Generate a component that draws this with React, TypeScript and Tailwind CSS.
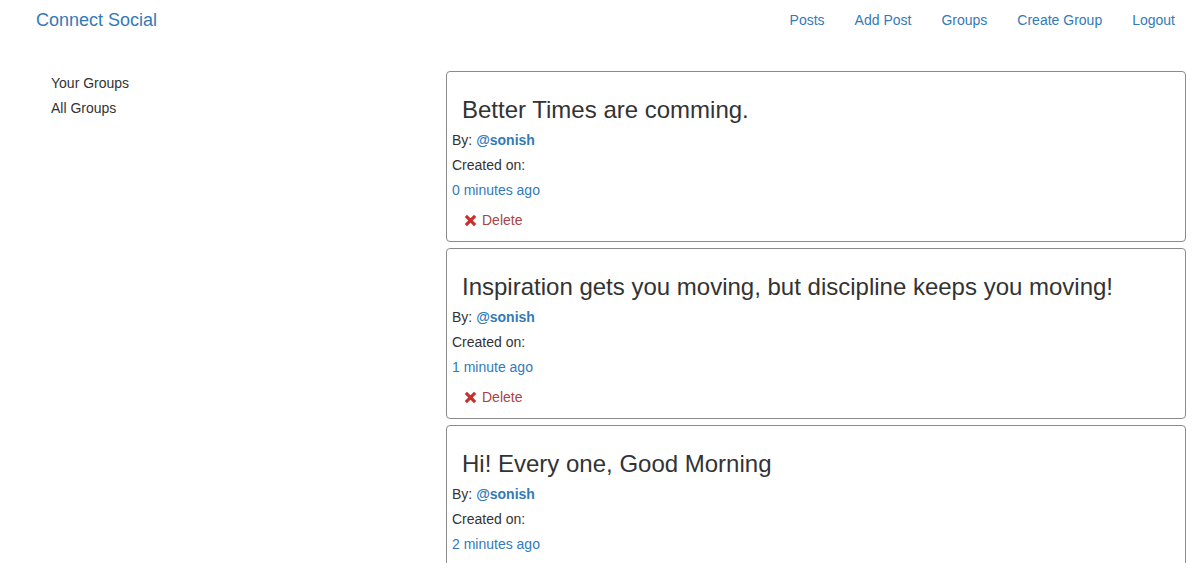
import React from 'react';

const posts = [
  { title: 'Better Times are comming.', user: '@sonish', ago: '0 minutes ago' },
  { title: 'Inspiration gets you moving, but discipline keeps you moving!', user: '@sonish', ago: '1 minute ago' },
  { title: 'Hi! Every one, Good Morning', user: '@sonish', ago: '2 minutes ago' },
];

const navLinks = ['Posts', 'Add Post', 'Groups', 'Create Group', 'Logout'];

const RemoveIcon: React.FC = () => (
  <svg width="13" height="13" viewBox="0 0 14 14" className="inline-block mr-[5px] -mt-[2px] align-middle">
    <path d="M2 2 L12 12 M12 2 L2 12" stroke="#c9302c" strokeWidth="3.4" strokeLinecap="butt" />
  </svg>
);

const App: React.FC = () => {
  return (
    <div className="min-h-screen bg-white text-[14px] leading-[20px] text-[#333]" style={{ fontFamily: '"Liberation Sans", Arial, sans-serif' }}>
      {/* Navbar */}
      <nav className="flex h-[40px] items-center justify-between pl-[36px] pr-[14px]">
        <a className="text-[18px] leading-[20px] text-[#337ab7]">Connect Social</a>
        <ul className="flex">
          {navLinks.map((l) => (
            <li key={l} className="px-[15px] text-[#337ab7]">
              {l}
            </li>
          ))}
        </ul>
      </nav>

      <div className="flex pt-[33px]">
        {/* Sidebar */}
        <div className="w-[446px] shrink-0 pl-[51px]">
          <div className="space-y-[5px]">
            <div>Your Groups</div>
            <div>All Groups</div>
          </div>
        </div>

        {/* Posts */}
        <div className="w-[740px] -mt-[2px]">
          {posts.map((p, i) => (
            <div key={i} className="mb-[6px] rounded-[4px] border border-[#8a8a8a] p-[5px]">
              <h3 className="mt-[20px] mb-[7px] pl-[10px] text-[24px] leading-[26px] text-[#333]">{p.title}</h3>
              <div className="space-y-[5px]">
                <p>
                  By: <span className="font-bold text-[#337ab7]">{p.user}</span>
                </p>
                <p>Created on:</p>
                <p className="text-[#337ab7]">{p.ago}</p>
              </div>
              <button className="mt-[4px] px-[12px] py-[6px] text-[#a94442]">
                <RemoveIcon />
                Delete
              </button>
            </div>
          ))}
        </div>
      </div>
    </div>
  );
};

export default App;
